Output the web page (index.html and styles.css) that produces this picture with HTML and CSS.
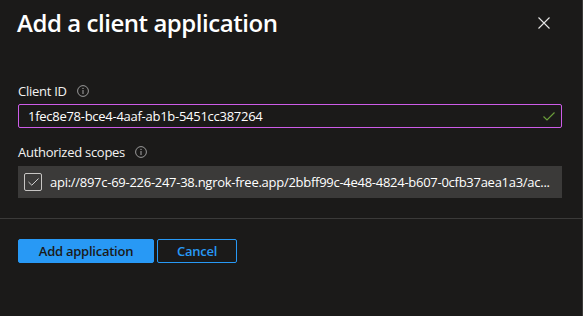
FILE: index.html
```html
<!DOCTYPE html>
<html lang="en">
<head>
<meta charset="utf-8">
<title>Add a client application</title>
<link rel="stylesheet" href="styles.css">
</head>
<body>
<div class="panel">
  <div class="header">
    <h1 class="title">Add a client application</h1>
    <button class="close" aria-label="Close">
      <svg width="12" height="12" viewBox="0 0 12 12"><path d="M0.5 0.5 L11.5 11.5 M11.5 0.5 L0.5 11.5" stroke="#e6e6e6" stroke-width="1.1" fill="none"/></svg>
    </button>
  </div>
  <div class="form">
    <div class="label">Client ID <span class="info"><svg width="12" height="12" viewBox="0 0 12 12"><circle cx="6" cy="6" r="5.4" stroke="#9a9a9a" stroke-width="1" fill="none"/><path d="M6 5 V9" stroke="#9a9a9a" stroke-width="1.1"/><circle cx="6" cy="3.4" r="0.7" fill="#9a9a9a"/></svg></span></div>
    <div class="input">
      <span class="value">1fec8e78-bce4-4aaf-ab1b-5451cc387264</span>
      <svg class="ok" width="12" height="9" viewBox="0 0 12 9"><path d="M0.5 4.5 L4 8 L11.5 0.5" stroke="#6b9e3a" stroke-width="1.2" fill="none"/></svg>
    </div>
    <div class="label scopes-label">Authorized scopes <span class="info"><svg width="12" height="12" viewBox="0 0 12 12"><circle cx="6" cy="6" r="5.4" stroke="#9a9a9a" stroke-width="1" fill="none"/><path d="M6 5 V9" stroke="#9a9a9a" stroke-width="1.1"/><circle cx="6" cy="3.4" r="0.7" fill="#9a9a9a"/></svg></span></div>
    <div class="scope">
      <span class="checkbox"><svg width="11" height="8" viewBox="0 0 11 8"><path d="M0.5 4 L3.8 7.2 L10.5 0.5" stroke="#d0d0d0" stroke-width="1" fill="none"/></svg></span>
      <span class="scope-text">api://897c-69-226-247-38.ngrok-free.app/2bbff99c-4e48-4824-b607-0cfb37aea1a3/ac...</span>
    </div>
  </div>
  <div class="divider"></div>
  <div class="actions">
    <button class="btn primary">Add application</button>
    <button class="btn secondary">Cancel</button>
  </div>
</div>
</body>
</html>
```
FILE: styles.css
```css
html, body {
  margin: 0;
  padding: 0;
  background: #1b1a19;
  height: 100%;
}
body {
  font-family: "Open Sans", "Noto Sans", sans-serif;
  color: #ffffff;
  border-right: 1px solid #3b3a39;
  box-sizing: border-box;
}
.header {
  display: flex;
  justify-content: space-between;
  align-items: center;
  padding: 7px 32px 0 17px;
}
.title {
  margin: 0;
  font-size: 24px;
  font-weight: 600;
  line-height: 32px;
  letter-spacing: -0.45px;
}
.close {
  background: none;
  border: 0;
  padding: 0;
  width: 12px;
  height: 12px;
  display: flex;
}
.form {
  padding: 43px 20px 0 18px;
  letter-spacing: -0.27px;
}
.label {
  font-size: 13px;
  line-height: 18px;
  display: flex;
  align-items: center;
  color: #f3f2f1;
}
.info {
  display: inline-flex;
  margin-left: 10px;
}
.input {
  margin-top: 4px;
  height: 24px;
  box-sizing: border-box;
  border: 1px solid #cd5ce8;
  border-radius: 2px;
  display: flex;
  align-items: center;
  justify-content: space-between;
  padding: 0 6px 0 9px;
}
.value {
  font-size: 13px;
  color: #ffffff;
}
.scopes-label {
  margin-top: 15px;
}
.scope {
  margin-top: 5px;
  height: 32px;
  background: #3b3a39;
  display: flex;
  align-items: center;
  padding: 0 6px 0 6px;
  gap: 8px;
}
.checkbox {
  flex: none;
  width: 18px;
  height: 18px;
  box-sizing: border-box;
  border: 1px solid #c8c6c4;
  border-radius: 2px;
  display: flex;
  align-items: center;
  justify-content: center;
}
.scope-text {
  font-size: 13px;
  white-space: nowrap;
  color: #ffffff;
}
.divider {
  margin-top: 20px;
  height: 1px;
  background: #3b3a39;
}
.actions {
  display: flex;
  gap: 3px;
  padding: 20px 0 0 18px;
}
.btn {
  height: 24px;
  border-radius: 2px;
  font-family: "Open Sans", "Noto Sans", sans-serif;
  font-size: 13px;
  font-weight: 600;
  letter-spacing: -0.25px;
  padding: 0;
  box-sizing: border-box;
}
.primary {
  width: 136px;
  background: #2899f5;
  border: 1px solid #2899f5;
  color: #1b1a19;
}
.secondary {
  width: 80px;
  background: transparent;
  border: 1px solid #2899f5;
  color: #2899f5;
}
```
